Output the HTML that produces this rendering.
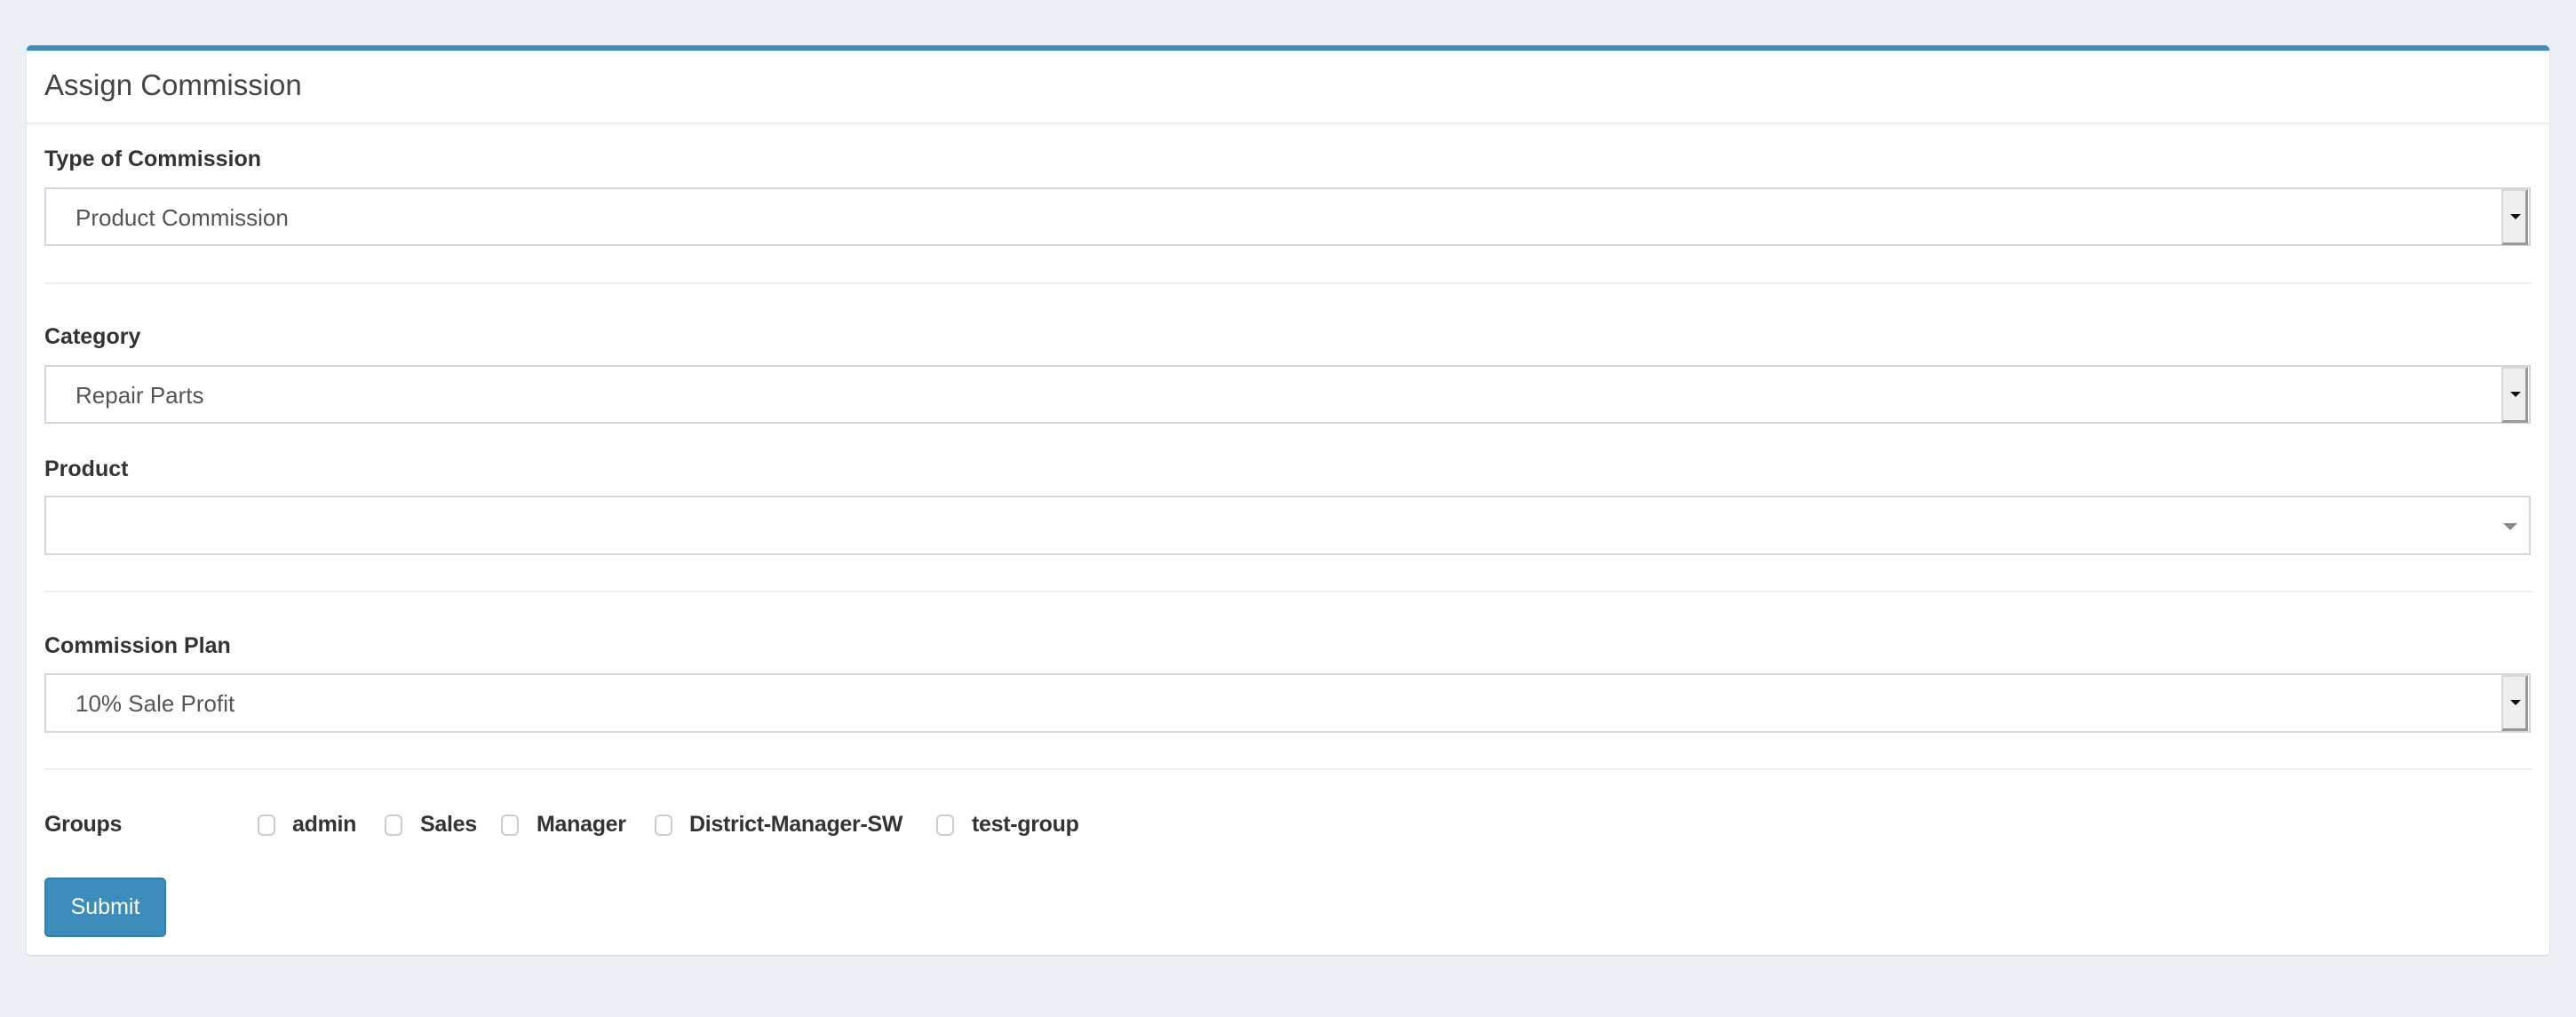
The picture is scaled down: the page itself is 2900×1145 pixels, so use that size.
<!DOCTYPE html>
<html><head><meta charset="utf-8"><style>
body{margin:0;width:2900px;height:1145px;background:#ecf0f5;font-family:"Liberation Sans",sans-serif;color:#333;position:relative;overflow:hidden}
.card{position:absolute;left:30px;top:51px;width:2840px;height:1024px;background:#fff;border-top:6px solid #3c8dbc;border-radius:5px 5px 4px 4px;box-shadow:0 1px 2px rgba(0,0,0,.12);box-sizing:border-box}
.a{position:absolute;white-space:nowrap}
.t{font-size:33px;line-height:36px;color:#444}
.l{font-size:25px;font-weight:bold;line-height:30px;color:#333}
.hr{position:absolute;left:50px;width:2800px;height:2px;background:#eee}
.sel{position:absolute;left:50px;width:2799px;height:66px;border:2px solid #d2d6de;box-sizing:border-box;background:#fff}
.sel span{position:absolute;left:33px;top:17px;font-size:26px;color:#555;line-height:30px}
.btn{position:absolute;right:1px;top:0;width:30px;height:63px;background:#efefef;border-left:2px solid #d8d8d8;border-top:2px solid #d8d8d8;border-right:3px solid #999;border-bottom:3px solid #999;box-sizing:border-box}
.btn:after{content:"";position:absolute;left:8px;top:26px;border-left:6px solid transparent;border-right:6px solid transparent;border-top:6px solid #111}
.cb{position:absolute;top:917px;width:20px;height:24px;border:2px solid #ccc;border-radius:6px;box-sizing:border-box;background:#fff}
.g{font-size:25px;font-weight:bold;top:913px;line-height:30px;letter-spacing:-0.3px}
.sub{position:absolute;left:50px;top:988px;width:137px;height:67px;background:#3c8dbc;border:2px solid #367fa9;border-radius:5px;box-sizing:border-box;color:#fff;font-size:25px;line-height:63px;text-align:center}
</style></head><body>
<div class="card"></div>
<div class="a t" style="left:50px;top:78px">Assign Commission</div>
<div class="hr" style="left:30px;width:2840px;top:138px"></div>
<div class="a l" style="left:50px;top:164px">Type of Commission</div>
<div class="sel" style="top:211px"><span>Product Commission</span><div class="btn"></div></div>
<div class="hr" style="top:318px"></div>
<div class="a l" style="left:50px;top:364px">Category</div>
<div class="sel" style="top:411px"><span>Repair Parts</span><div class="btn"></div></div>
<div class="a l" style="left:50px;top:513px">Product</div>
<div class="sel" style="top:558px;height:67px"><div style="position:absolute;left:2766px;top:29px;border-left:8px solid transparent;border-right:8px solid transparent;border-top:8px solid #888"></div></div>
<div class="hr" style="top:665px"></div>
<div class="a l" style="left:50px;top:712px">Commission Plan</div>
<div class="sel" style="top:758px;height:67px"><span>10% Sale Profit</span><div class="btn"></div></div>
<div class="hr" style="top:865px"></div>
<div class="a g" style="left:50px">Groups</div>
<div class="cb" style="left:290px"></div><div class="a g" style="left:329px">admin</div>
<div class="cb" style="left:433px"></div><div class="a g" style="left:473px">Sales</div>
<div class="cb" style="left:564px"></div><div class="a g" style="left:604px">Manager</div>
<div class="cb" style="left:737px"></div><div class="a g" style="left:776px">District-Manager-SW</div>
<div class="cb" style="left:1054px"></div><div class="a g" style="left:1094px">test-group</div>
<div class="sub">Submit</div>
</body></html>
